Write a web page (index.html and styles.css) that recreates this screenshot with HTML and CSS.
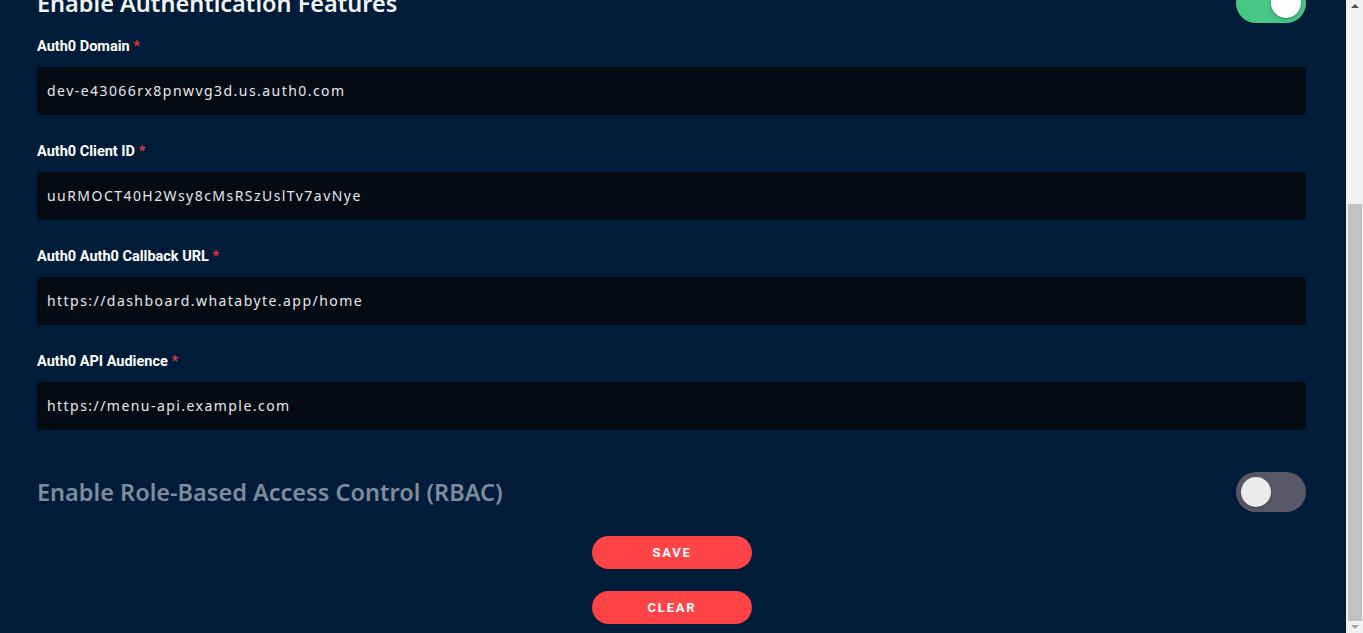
FILE: index.html
```html
<!DOCTYPE html>
<html lang="en">
<head>
<meta charset="utf-8">
<title>Settings</title>
<link rel="stylesheet" href="styles.css">
</head>
<body>
<div class="viewport">
  <main class="page">
    <section class="settings">
      <div class="feature-row">
        <h2 class="feature-title">Enable Authentication Features</h2>
        <span class="toggle toggle-on"><span class="knob"></span></span>
      </div>
      <form class="form">
        <div class="field">
          <label class="label">Auth0 Domain <span class="req">*</span></label>
          <div class="input">dev-e43066rx8pnwvg3d.us.auth0.com</div>
        </div>
        <div class="field">
          <label class="label">Auth0 Client ID <span class="req">*</span></label>
          <div class="input">uuRMOCT40H2Wsy8cMsRSzUslTv7avNye</div>
        </div>
        <div class="field">
          <label class="label">Auth0 Auth0 Callback URL <span class="req">*</span></label>
          <div class="input">https://dashboard.whatabyte.app/home</div>
        </div>
        <div class="field">
          <label class="label">Auth0 API Audience <span class="req">*</span></label>
          <div class="input">https://menu-api.example.com</div>
        </div>
      </form>
      <div class="feature-row rbac">
        <h2 class="feature-title muted">Enable Role-Based Access Control (RBAC)</h2>
        <span class="toggle toggle-off"><span class="knob"></span></span>
      </div>
      <div class="actions">
        <button class="btn" type="button">Save</button>
        <button class="btn" type="button">Clear</button>
      </div>
    </section>
  </main>
  <div class="scrollbar" aria-hidden="true">
    <div class="sb-btn sb-up"><span class="arrow-up"></span></div>
    <div class="sb-track">
      <div class="sb-spacer"></div>
      <div class="sb-thumb"></div>
    </div>
    <div class="sb-btn sb-down"><span class="arrow-down"></span></div>
  </div>
</div>
</body>
</html>
```
FILE: styles.css
```css
html, body {
  margin: 0;
  padding: 0;
  height: 100%;
  overflow: hidden;
  background: #001c38;
}
body {
  font-family: "Noto Sans", "Liberation Sans", sans-serif;
  color: #ffffff;
}
.viewport {
  display: flex;
  height: 100vh;
}
.page {
  flex: 1;
  min-width: 0;
  display: flex;
  flex-direction: column;
  justify-content: flex-end;
  overflow: hidden;
  padding: 0 40px 9px 37px;
}
.settings {
  display: flex;
  flex-direction: column;
  flex: none;
}
.feature-row {
  display: flex;
  align-items: center;
  justify-content: space-between;
  height: 40px;
}
.feature-title {
  margin: 0;
  font-size: 23.5px;
  font-weight: 600;
  line-height: 30px;
  color: #f2f4f7;
}
.feature-title.muted {
  color: #7d8c9c;
}
.toggle {
  position: relative;
  width: 70px;
  height: 40px;
  border-radius: 20px;
  flex: none;
}
.toggle-on { background: #47c784; }
.toggle-off { background: #595866; }
.knob {
  position: absolute;
  top: 5px;
  width: 30px;
  height: 30px;
  border-radius: 50%;
  box-shadow: 0 1px 3px rgba(0,0,0,0.35);
}
.toggle-on .knob { right: 5px; background: #ffffff; }
.toggle-off .knob { left: 5px; background: #ececef; }
.form {
  display: flex;
  flex-direction: column;
  gap: 25px;
  margin-top: 12px;
}
.field {
  display: flex;
  flex-direction: column;
  gap: 10px;
}
.label {
  font-family: Roboto, "Noto Sans", sans-serif;
  font-size: 14.5px;
  font-weight: 700;
  line-height: 20px;
  padding-top: 2px;
  color: #ffffff;
}
.req { color: #e5333f; }
.input {
  box-sizing: border-box;
  height: 48px;
  display: flex;
  align-items: center;
  padding: 0 10px 2px;
  background: #050b13;
  border-radius: 3px;
  font-size: 14px;
  letter-spacing: 1.45px;
  color: #e6e8ec;
}
.rbac { margin-top: 42px; }
.actions {
  display: flex;
  flex-direction: column;
  align-items: center;
  gap: 22px;
  margin-top: 24px;
  margin-right: -1px;
}
.btn {
  width: 160px;
  height: 33px;
  border: none;
  border-radius: 17px;
  background: #ff4448;
  color: #ffffff;
  font-family: Roboto, "Noto Sans", sans-serif;
  font-size: 13px;
  font-weight: 700;
  letter-spacing: 1.8px;
  text-transform: uppercase;
  padding: 0;
}
.scrollbar {
  width: 17px;
  flex: none;
  display: flex;
  flex-direction: column;
  background: #f1f1f1;
}
.sb-btn {
  display: flex;
  justify-content: center;
  flex: none;
}
.sb-up {
  height: 17px;
  padding-top: 4px;
  box-sizing: border-box;
}
.sb-down {
  height: 12px;
  padding-top: 4px;
  box-sizing: border-box;
}
.arrow-up {
  width: 0;
  height: 0;
  border-left: 4px solid transparent;
  border-right: 4px solid transparent;
  border-bottom: 4px solid #505050;
}
.arrow-down {
  width: 0;
  height: 0;
  border-left: 4px solid transparent;
  border-right: 4px solid transparent;
  border-top: 4px solid #a3a3a3;
}
.sb-track {
  flex: 1;
  display: flex;
  flex-direction: column;
  padding: 0 1px 0 2px;
}
.sb-spacer {
  height: 187px;
  flex: none;
}
.sb-thumb {
  flex: 1;
  background: #c1c1c1;
}
```
